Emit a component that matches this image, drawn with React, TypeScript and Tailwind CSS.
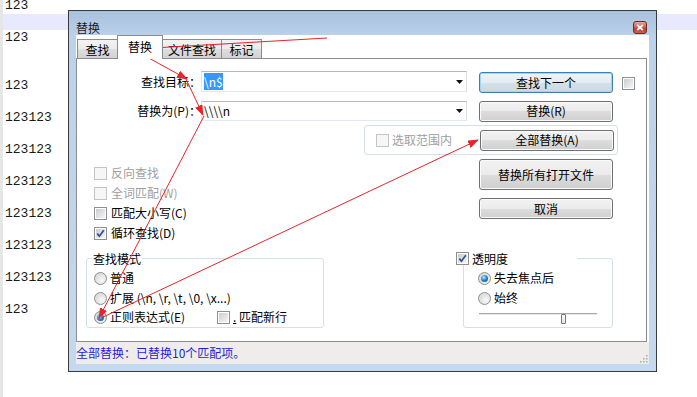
import React from "react";

const LINES = [
  "123", "", "123", "", "", "123", "", "123123", "", "123123", "", "123123", "", "123123", "",
  "123123", "", "123123", "", "123", "", "", "", "", "", "", "",
];

function Check({ checked = false, disabled = false }: { checked?: boolean; disabled?: boolean }) {
  if (disabled) {
    return <span className="block h-[13px] w-[13px] shrink-0 border border-[#c4c4c4] bg-[#f6f6f6]" />;
  }
  return (
    <span className="flex h-[13px] w-[13px] shrink-0 border border-[#8e8f8f] bg-white p-px">
      <span className="flex h-full w-full items-center justify-center bg-[linear-gradient(135deg,#cbcccf,#f6f6f6)]">
        {checked && (
          <svg width="9" height="9" viewBox="0 0 9 9">
            <path d="M1.3 4.6 L3.4 7.2 L7.8 1.2" fill="none" stroke="#2f4f95" strokeWidth="1.7" />
          </svg>
        )}
      </span>
    </span>
  );
}

function Radio({ checked = false }: { checked?: boolean }) {
  return (
    <span className="flex h-[13px] w-[13px] shrink-0 items-center justify-center rounded-full border border-[#8e8f8f] bg-[radial-gradient(circle_at_65%_65%,#f8f8f8,#cfcfcf)]">
      {checked && (
        <span className="block h-[7px] w-[7px] rounded-full bg-[radial-gradient(circle_at_40%_35%,#b9ecff,#2b8bd0_45%,#0b3a66)]" />
      )}
    </span>
  );
}

const btn =
  "flex w-[134px] shrink-0 items-center justify-center rounded-[3px] border border-[#707070] bg-[linear-gradient(to_bottom,#f2f2f2_0%,#ebebeb_50%,#dddddd_50%,#cfcfcf_100%)] shadow-[inset_0_0_0_1px_#fbfbfb] leading-none text-black";

const btnPrimary =
  "flex w-[134px] shrink-0 items-center justify-center rounded-[3px] border border-[#3c7fb1] bg-[linear-gradient(to_bottom,#eef4f8_0%,#e3ecf1_50%,#d5e1e8_50%,#cbd9e2_100%)] shadow-[inset_0_0_0_1px_#9fd6f3] leading-none text-black";

function Combo({ children, tall }: { children: React.ReactNode; tall?: boolean }) {
  return (
    <div
      className={
        tall
          ? "flex h-[21px] w-[266px] shrink-0 items-center border border-[#b5b8bf] border-b-[#e3e9ef] border-l-[#e2e3ea] border-r-[#dbdfe6] bg-white pl-[2px] pr-[3px]"
          : "flex h-[20px] w-[266px] shrink-0 items-center border border-[#b5b8bf] border-b-[#e3e9ef] border-l-[#e2e3ea] border-r-[#dbdfe6] bg-white pl-[2px] pr-[3px]"
      }
    >
      <div className="flex-1 leading-[14px]">{children}</div>
      <svg width="7" height="4" viewBox="0 0 7 4">
        <path d="M0 0 H7 L3.5 4 Z" fill="#111" />
      </svg>
    </div>
  );
}

function Arrows() {
  const c = "#e2262b";
  const segs = [
    [327, 38, 153, 48],
    [147, 57, 187, 79],
    [186, 79, 203, 115],
    [204, 116, 99, 318],
    [101, 318, 478, 140],
  ];
  return (
    <svg className="pointer-events-none absolute left-0 top-0" width="697" height="397">
      <defs>
        <marker id="ah" markerWidth="11" markerHeight="8" refX="10" refY="4" orient="auto" markerUnits="userSpaceOnUse">
          <path d="M0,0 L11,4 L0,8 Z" fill={c} />
        </marker>
      </defs>
      {segs.map((s, i) => (
        <line key={i} x1={s[0]} y1={s[1]} x2={s[2]} y2={s[3]} stroke={c} strokeWidth="1" markerEnd="url(#ah)" />
      ))}
    </svg>
  );
}

function Dialog() {
  return (
    <div className="absolute left-[68px] top-[10px] flex h-[362px] w-[589px] flex-col border border-[#3b3b3b] bg-[linear-gradient(to_bottom,#a8c1de_0px,#bcd2ea_26px,#c4d8ee_100%)] font-['Noto_Sans_CJK_SC',sans-serif] text-[12px] text-black">
      {/* title bar */}
      <div className="flex h-[24px] shrink-0 items-start justify-between pl-[7px] pr-[9px]">
        <span className="pt-[11px] leading-none text-[#1b1b1b]">替换</span>
        <div className="mt-[10px] flex h-[13px] w-[14px] items-center justify-center rounded-[3px] border border-[#6e2a22] bg-[linear-gradient(to_bottom,#e8a599,#cd5b4c_50%,#b73a2c_51%,#c9604f)]">
          <svg width="8" height="7" viewBox="0 0 8 7">
            <path d="M1.2 1 L6.8 6 M6.8 1 L1.2 6" stroke="#fff" strokeWidth="1.8" />
          </svg>
        </div>
      </div>

      {/* client */}
      <div className="mx-[7px] mb-[7px] flex flex-1 flex-col bg-white">
        {/* tabs */}
        <div className="flex h-[23px] shrink-0 items-end pl-[1px]">
          <div className="flex h-[19px] w-[41px] items-center justify-center border border-b-0 border-[#898c95] bg-[linear-gradient(to_bottom,#f3f3f3,#ebebeb_50%,#dedede_50%,#d2d2d2)] pt-[2px] leading-none">
            查找
          </div>
          <div className="relative z-10 -mb-px -ml-px flex h-[24px] w-[46px] items-center justify-center border border-b-0 border-[#898c95] bg-white pb-[2px] leading-none">
            替换
          </div>
          <div className="-ml-px flex h-[19px] w-[60px] items-center justify-center border border-b-0 border-[#898c95] bg-[linear-gradient(to_bottom,#f3f3f3,#ebebeb_50%,#dedede_50%,#d2d2d2)] pt-[2px] leading-none">
            文件查找
          </div>
          <div className="-ml-px flex h-[19px] w-[41px] items-center justify-center border border-b-0 border-[#898c95] bg-[linear-gradient(to_bottom,#f3f3f3,#ebebeb_50%,#dedede_50%,#d2d2d2)] pt-[2px] leading-none">
            标记
          </div>
        </div>

        {/* tab page */}
        <div className="mr-[2px] flex h-[284px] shrink-0 flex-col border border-[#898c95] bg-white">
          {/* row 1 */}
          <div className="mt-[12px] flex h-[21px] items-center">
            <div className="w-[124px] text-right leading-[16px]">查找目标：</div>
            <Combo tall>
              <span className="bg-[#3399ff] text-white">{"\\n$"}</span>
            </Combo>
            <div className={btnPrimary + " ml-[12px] mt-[2px] h-[21px]"}>查找下一个</div>
            <span className="ml-[9px] mt-[3px]">
              <Check />
            </span>
          </div>

          {/* row 2 */}
          <div className="mt-[9px] flex h-[20px] items-center">
            <div className="w-[124px] text-right leading-[16px]">替换为(P)：</div>
            <Combo>
              <span>{"\\\\\\\\n"}</span>
            </Combo>
            <div className={btn + " ml-[12px] h-[21px]"}>替换(R)</div>
          </div>

          {/* row 3 */}
          <div className="ml-[287px] mt-[4px] flex h-[30px] w-[254px] items-center rounded-[3px] border border-[#d5dfe5]">
            <span className="ml-[11px]">
              <Check disabled />
            </span>
            <span className="ml-[3px] leading-[16px] text-[#a0a0a0]">选取范围内</span>
            <div className={btn + " ml-auto mr-[3px] h-[21px]"}>全部替换(A)</div>
          </div>

          {/* row 4 */}
          <div className="mt-[4px] flex">
            <div className="flex w-[402px] flex-col pl-[17px] pt-[4px]">
              <div className="flex h-[20px] items-center gap-[4px] text-[#a0a0a0]">
                <Check disabled />
                <span className="leading-[16px]">反向查找</span>
              </div>
              <div className="flex h-[20px] items-center gap-[4px] text-[#a0a0a0]">
                <Check disabled />
                <span className="leading-[16px]">全词匹配(W)</span>
              </div>
              <div className="flex h-[20px] items-center gap-[4px]">
                <Check />
                <span className="leading-[16px]">匹配大小写(C)</span>
              </div>
              <div className="flex h-[20px] items-center gap-[4px]">
                <Check checked />
                <span className="leading-[16px]">循环查找(D)</span>
              </div>
            </div>
            <div className="flex flex-col">
              <div className={btn + " h-[31px]"}>替换所有打开文件</div>
              <div className={btn + " mt-[8px] h-[21px]"}>取消</div>
            </div>
          </div>

          {/* row 5 */}
          <div className="mt-[9px] flex items-start">
            <div className="relative ml-[9px] mt-[6px] h-[70px] w-[238px] rounded-[3px] border border-[#d5dfe5] pl-[7px] pt-[9px]">
              <span className="absolute left-[5px] top-[-8px] bg-white px-px leading-[16px]">查找模式</span>
              <div className="flex h-[20px] items-center gap-[3px]">
                <Radio />
                <span className="leading-[16px]">普通</span>
              </div>
              <div className="flex h-[20px] items-center gap-[3px]">
                <Radio />
                <span className="leading-[16px]">{"扩展 (\\n, \\r, \\t, \\0, \\x...)"}</span>
              </div>
              <div className="flex h-[18px] items-center">
                <Radio checked />
                <span className="ml-[3px] w-[107px] leading-[16px]">正则表达式(E)</span>
                <Check />
                <span className="ml-[3px] leading-[16px]">
                  <span className="underline">.</span> 匹配新行
                </span>
              </div>
            </div>

            <div className="ml-[132px] flex flex-col">
              <div className="relative z-10 flex h-[13px] w-[121px] items-center gap-[3px] bg-white">
                <Check checked />
                <span className="leading-[16px]">透明度</span>
              </div>
              <div className="-mt-[7px] ml-[7px] h-[70px] w-[150px] rounded-[3px] border border-[#d5dfe5] pl-[14px] pt-[9px]">
                <div className="flex h-[20px] items-center gap-[3px]">
                  <Radio checked />
                  <span className="leading-[16px]">失去焦点后</span>
                </div>
                <div className="flex h-[20px] items-center gap-[3px]">
                  <Radio />
                  <span className="leading-[16px]">始终</span>
                </div>
                <div className="relative ml-[1px] h-[12px] w-[118px]">
                  <div className="mt-[5px] h-[2px] border-t border-[#a8a8a8] bg-[#e8e8e8]" />
                  <div className="absolute left-[82px] top-[1px] h-[10px] w-[5px] rounded-[1px] border border-[#777] bg-[linear-gradient(to_bottom,#fdfdfd,#e4e4e4)]" />
                </div>
              </div>
            </div>
          </div>
        </div>

        {/* status bar */}
        <div className="flex h-[22px] shrink-0 items-center justify-between bg-[#f0ecec] text-[#1f1fd6]">
          <span className="leading-none">全部替换：已替换10个匹配项。</span>
          <svg width="10" height="10" viewBox="0 0 10 10" className="mr-[1px] mt-[10px]">
            {[
              [8, 2],
              [5, 5],
              [8, 5],
              [2, 8],
              [5, 8],
              [8, 8],
            ].map((p, i) => (
              <rect key={i} x={p[0]} y={p[1]} width="1.5" height="1.5" fill="#a8a8a8" />
            ))}
          </svg>
        </div>
      </div>
    </div>
  );
}

export default function App() {
  return (
    <div className="relative h-[397px] w-[697px] overflow-hidden bg-white">
      <div className="flex h-full">
        <div className="w-[3px] shrink-0 bg-[#e6e6e6]" />
        <div className="-mt-[2px] flex-1 font-['Liberation_Mono',monospace] text-[13px] leading-[16px] text-[#1a1a1a]">
          {LINES.map((t, i) => (
            <div key={i} className={i === 1 ? "h-[16px] bg-[#e8e8ff] pl-[2px]" : "h-[16px] pl-[2px]"}>
              {t}
            </div>
          ))}
        </div>
      </div>
      <Dialog />
      <Arrows />
    </div>
  );
}
